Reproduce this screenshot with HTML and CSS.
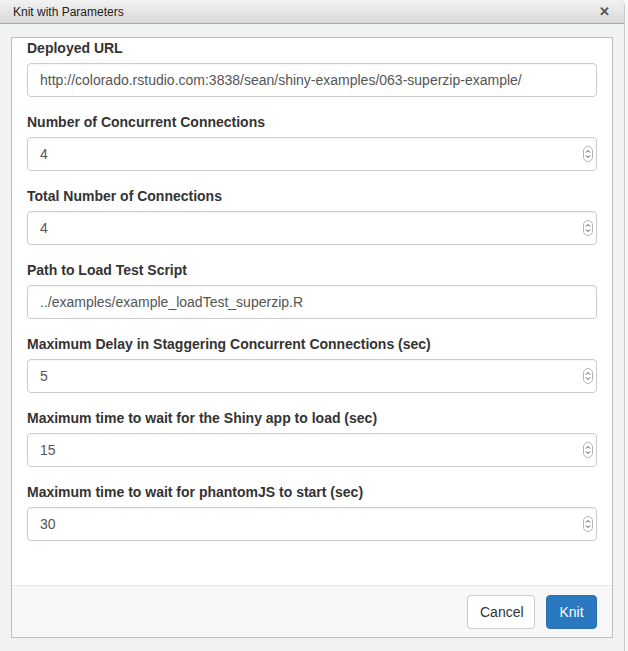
FILE: index.html
```html
<!DOCTYPE html>
<html>
<head>
<meta charset="utf-8">
<link rel="stylesheet" href="styles.css">
</head>
<body>
<div class="window">
  <div class="titlebar">
    <span class="title">Knit with Parameters</span>
    <span class="close">&#x2715;</span>
  </div>
  <div class="body">
    <div class="panel">
      <div class="content">
        <div class="group">
          <label class="label">Deployed URL</label>
          <div class="input">http://colorado.rstudio.com:3838/sean/shiny-examples/063-superzip-example/</div>
        </div>
        <div class="group">
          <label class="label">Number of Concurrent Connections</label>
          <div class="input num">4<span class="spin"><svg width="10" height="16" viewBox="0 0 10 16"><rect x="0.5" y="0.5" width="9" height="15" rx="4.5" fill="#fff" stroke="#b5b5b5"/><path d="M3 6.5 L5 4.5 L7 6.5" fill="none" stroke="#444" stroke-width="1"/><path d="M3 9.5 L5 11.5 L7 9.5" fill="none" stroke="#444" stroke-width="1"/></svg></span></div>
        </div>
        <div class="group">
          <label class="label">Total Number of Connections</label>
          <div class="input num">4<span class="spin"><svg width="10" height="16" viewBox="0 0 10 16"><rect x="0.5" y="0.5" width="9" height="15" rx="4.5" fill="#fff" stroke="#b5b5b5"/><path d="M3 6.5 L5 4.5 L7 6.5" fill="none" stroke="#444" stroke-width="1"/><path d="M3 9.5 L5 11.5 L7 9.5" fill="none" stroke="#444" stroke-width="1"/></svg></span></div>
        </div>
        <div class="group">
          <label class="label">Path to Load Test Script</label>
          <div class="input">../examples/example_loadTest_superzip.R</div>
        </div>
        <div class="group">
          <label class="label">Maximum Delay in Staggering Concurrent Connections (sec)</label>
          <div class="input num">5<span class="spin"><svg width="10" height="16" viewBox="0 0 10 16"><rect x="0.5" y="0.5" width="9" height="15" rx="4.5" fill="#fff" stroke="#b5b5b5"/><path d="M3 6.5 L5 4.5 L7 6.5" fill="none" stroke="#444" stroke-width="1"/><path d="M3 9.5 L5 11.5 L7 9.5" fill="none" stroke="#444" stroke-width="1"/></svg></span></div>
        </div>
        <div class="group">
          <label class="label">Maximum time to wait for the Shiny app to load (sec)</label>
          <div class="input num">15<span class="spin"><svg width="10" height="16" viewBox="0 0 10 16"><rect x="0.5" y="0.5" width="9" height="15" rx="4.5" fill="#fff" stroke="#b5b5b5"/><path d="M3 6.5 L5 4.5 L7 6.5" fill="none" stroke="#444" stroke-width="1"/><path d="M3 9.5 L5 11.5 L7 9.5" fill="none" stroke="#444" stroke-width="1"/></svg></span></div>
        </div>
        <div class="group">
          <label class="label">Maximum time to wait for phantomJS to start (sec)</label>
          <div class="input num">30<span class="spin"><svg width="10" height="16" viewBox="0 0 10 16"><rect x="0.5" y="0.5" width="9" height="15" rx="4.5" fill="#fff" stroke="#b5b5b5"/><path d="M3 6.5 L5 4.5 L7 6.5" fill="none" stroke="#444" stroke-width="1"/><path d="M3 9.5 L5 11.5 L7 9.5" fill="none" stroke="#444" stroke-width="1"/></svg></span></div>
        </div>
      </div>
      <div class="footer">
        <button class="btn cancel">Cancel</button>
        <button class="btn knit">Knit</button>
      </div>
    </div>
  </div>
</div>
</body>
</html>
```
FILE: styles.css
```css
html, body {
  margin: 0;
  padding: 0;
  background: #f7f7f7;
}
body {
  width: 628px;
  height: 651px;
  overflow: hidden;
}
.window {
  width: 624px;
  height: 651px;
  background: #f1f3f2;
  border-right: 1px solid #c9cbca;
  border-top-right-radius: 6px;
  display: flex;
  flex-direction: column;
}
.titlebar {
  height: 24px;
  box-sizing: border-box;
  background: linear-gradient(#f2f2f2, #d9d9d9);
  border-bottom: 1px solid #a8a8a8;
  border-top-right-radius: 6px;
  border-top-left-radius: 3px;
  display: flex;
  align-items: center;
  justify-content: space-between;
  padding: 0 14px 0 13px;
  font-family: "Liberation Sans", Arial, sans-serif;
  font-size: 12px;
  color: #222;
}
.close {
  font-size: 13px;
  font-weight: bold;
  color: #555;
  line-height: 1;
}
.body {
  padding: 13px 11px 0 11px;
}
.panel {
  width: 602px;
  height: 601px;
  box-sizing: border-box;
  background: #fff;
  border: 1px solid #bdbdbd;
  display: flex;
  flex-direction: column;
}
.content {
  flex: 1;
  padding: 0 15px;
  font-family: "Liberation Sans", Arial, sans-serif;
}
.group {
  margin-bottom: 15px;
  display: flex;
  flex-direction: column;
}
.label {
  font-size: 14px;
  font-weight: bold;
  color: #333;
  line-height: 20px;
  margin-bottom: 5px;
}
.input {
  height: 34px;
  box-sizing: border-box;
  border: 1px solid #cccccc;
  border-radius: 4px;
  padding: 0 12px;
  display: flex;
  align-items: center;
  font-size: 14px;
  color: #555;
  box-shadow: inset 0 1px 1px rgba(0,0,0,0.04);
}
.num {
  justify-content: space-between;
  padding-right: 3px;
}
.spin {
  display: flex;
  align-items: center;
}
.footer {
  height: 52px;
  box-sizing: border-box;
  border-top: 1px solid #e5e5e5;
  background: #f7f7f7;
  display: flex;
  justify-content: flex-end;
  align-items: center;
  gap: 11px;
  padding: 0 15px 0 0;
}
.btn {
  height: 34px;
  box-sizing: border-box;
  border-radius: 4px;
  font-family: "Liberation Sans", Arial, sans-serif;
  font-size: 14px;
  padding: 0 12px;
  margin: 0;
}
.cancel {
  width: 68px;
  background: #fff;
  border: 1px solid #cccccc;
  color: #333;
}
.knit {
  width: 51px;
  background: #2a78bf;
  border: 1px solid #2a6fae;
  color: #fff;
}
```
